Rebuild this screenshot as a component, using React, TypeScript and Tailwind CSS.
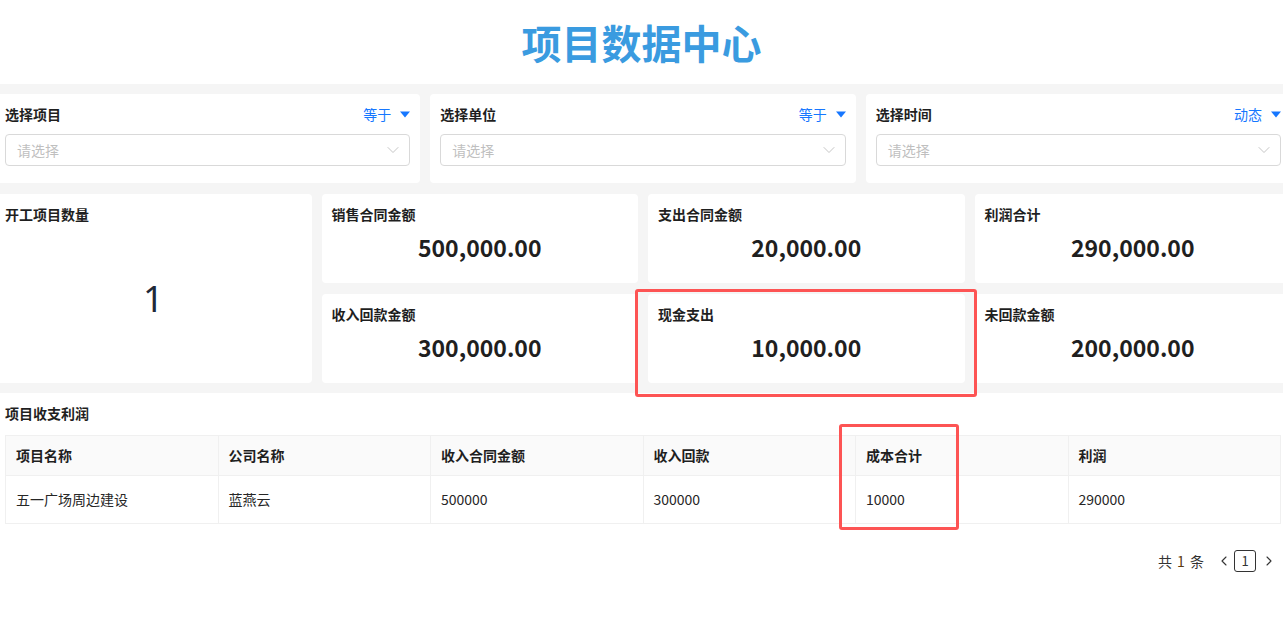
import { ChevronDown, ChevronLeft, ChevronRight } from "lucide-react"

const filters = [
  { label: "选择项目", mode: "等于" },
  { label: "选择单位", mode: "等于" },
  { label: "选择时间", mode: "动态" },
]

const stats = [
  { label: "销售合同金额", value: "500,000.00" },
  { label: "支出合同金额", value: "20,000.00" },
  { label: "利润合计", value: "290,000.00" },
  { label: "收入回款金额", value: "300,000.00" },
  { label: "现金支出", value: "10,000.00" },
  { label: "未回款金额", value: "200,000.00" },
]

const columns = ["项目名称", "公司名称", "收入合同金额", "收入回款", "成本合计", "利润"]
const rows = [["五一广场周边建设", "蓝燕云", "500000", "300000", "10000", "290000"]]

function Caret() {
  return (
    <svg width="10" height="7" viewBox="0 0 10 7" className="ml-[9px]">
      <path d="M0 0.5 L10 0.5 L5 6.5 Z" fill="#1677ff" />
    </svg>
  )
}

export default function App() {
  return (
    <div
      className="relative min-h-[625px] w-full overflow-hidden bg-white text-[#1f1f1f]"
      style={{ fontFamily: '"Noto Sans CJK SC", "Noto Sans", sans-serif' }}
    >
      {/* header */}
      <div className="flex h-[84px] items-center justify-center">
        <h1 className="text-[40px] font-bold leading-none text-[#3a9be0]">项目数据中心</h1>
      </div>

      {/* filters + stats */}
      <div className="bg-[#f5f5f5] py-[10px]">
        <div className="ml-[-5px] w-[1296px]">
          <div className="grid grid-cols-3 gap-[10px]">
            {filters.map((f) => (
              <div key={f.label} className="rounded-[4px] bg-white px-[10px] pb-[17px] pt-[10px]">
                <div className="flex h-[20px] items-center justify-between">
                  <span className="text-[14px] font-bold leading-[20px]">{f.label}</span>
                  <span className="flex items-center text-[14px] leading-[20px] text-[#1677ff]">
                    {f.mode}
                    <Caret />
                  </span>
                </div>
                <div className="mt-[10px] flex h-[32px] items-center justify-between rounded-[4px] border border-[#d9d9d9] pl-[11px] pr-[6px]">
                  <span className="text-[14px] text-[#bfbfbf]">请选择</span>
                  <ChevronDown size={20} strokeWidth={1.1} className="text-[#bfbfbf]" />
                </div>
              </div>
            ))}
          </div>

          <div className="mt-[11px] grid grid-cols-4 grid-rows-[89px_89px] gap-x-[10px] gap-y-[11px]">
            <div className="row-span-2 flex flex-col rounded-[4px] bg-white px-[10px] pt-[10px]">
              <span className="text-[14px] font-bold leading-[20px]">开工项目数量</span>
              <div className="flex flex-1 items-center justify-center pb-[10px]">
                <span
                  className="text-[36px] font-normal leading-none text-[#1f2937]"
                  style={{ fontFamily: '"Noto Sans", sans-serif' }}
                >
                  1
                </span>
              </div>
            </div>
            {stats.map((s) => (
              <div key={s.label} className="rounded-[4px] bg-white px-[10px] pt-[10px]">
                <div className="text-[14px] font-bold leading-[20px]">{s.label}</div>
                <div className="mt-[7px] text-center text-[23px] font-bold leading-[32px]">{s.value}</div>
              </div>
            ))}
          </div>
        </div>
      </div>

      {/* table section */}
      <div className="ml-[-5px] w-[1296px] px-[10px] pt-[10px]">
        <div className="text-[14px] font-bold leading-[20px]">项目收支利润</div>
        <table className="mt-[12px] w-full table-fixed border-collapse border border-[#f0f0f0] text-[14px]">
          <thead>
            <tr className="h-[40px] bg-[#fafafa]">
              {columns.map((c) => (
                <th key={c} className="border border-[#f0f0f0] px-[10px] text-left font-bold">
                  {c}
                </th>
              ))}
            </tr>
          </thead>
          <tbody>
            {rows.map((r, i) => (
              <tr key={i} className="h-[48px]">
                {r.map((v, j) => (
                  <td key={j} className="border border-[#f0f0f0] px-[10px] text-[#262626]">
                    {v}
                  </td>
                ))}
              </tr>
            ))}
          </tbody>
        </table>

        <div className="mt-[26px] flex items-center justify-end pr-[4px] text-[14px] text-[#333]">
          <span className="tracking-[1px]">
            共 <span className="text-[#5a3a10]">1</span> 条
          </span>
          <ChevronLeft size={16} strokeWidth={1.6} className="ml-[11px] text-[#333]" />
          <span className="ml-[2px] flex h-[22px] w-[22px] items-center justify-center rounded-[3px] border border-[#333] text-[13px]">
            1
          </span>
          <ChevronRight size={16} strokeWidth={1.6} className="ml-[5px] text-[#333]" />
        </div>
      </div>

      {/* annotation boxes */}
      <div className="absolute left-[635px] top-[289px] h-[108px] w-[342px] rounded-[3px] border-[3px] border-[#fd5454]" />
      <div className="absolute left-[839px] top-[424px] h-[106px] w-[120px] rounded-[3px] border-[3px] border-[#fd5454]" />
    </div>
  )
}
